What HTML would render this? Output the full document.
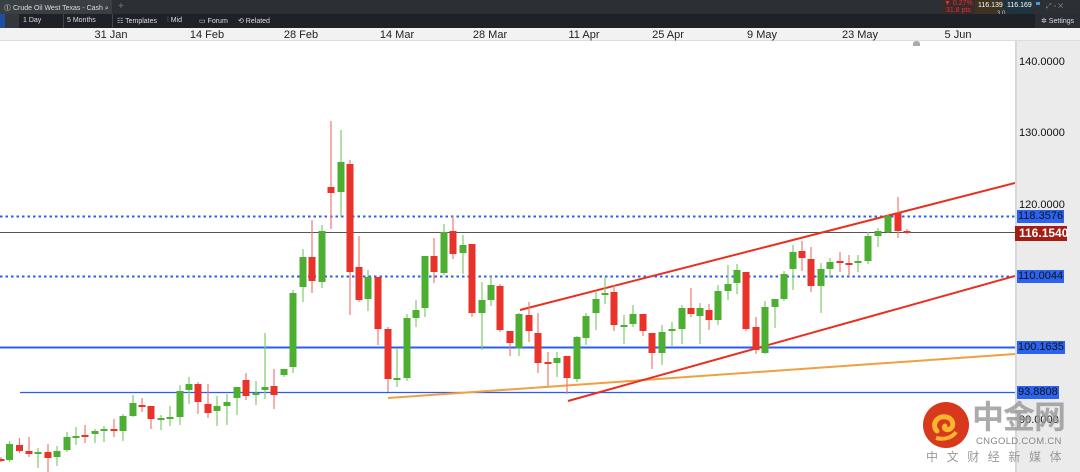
<!DOCTYPE html>
<html><head><meta charset="utf-8"><style>
*{margin:0;padding:0;box-sizing:border-box}
body{width:1080px;height:472px;overflow:hidden;background:#fff;font-family:"Liberation Sans","Noto Sans CJK SC",sans-serif;position:relative}
.a{position:absolute}
.t1{left:0;top:0;width:1080px;height:14px;background:#2c3034}
.t2{left:0;top:14px;width:1080px;height:14px;background:#1e2226}
.ds{left:0;top:28px;width:1080px;height:13px;background:#f2f2f2;border-bottom:1px solid #ddd}
.ds span{position:absolute;top:1px;font-size:11px;color:#222;transform:translateX(-50%)}
.ax{left:1015px;top:41px;width:65px;height:431px;background:#ebebeb;border-left:2px solid #d8d8d8}
.lab{position:absolute;font-size:11px;color:#111;left:1019px}
.bx{position:absolute;left:1017px;height:13px;background:#2b63f0;color:#111;font-size:11px;padding:0 1px;line-height:13px}
.w{color:#ddd;font-size:7px}
</style></head><body>
<div class="a t1"></div>
<div class="a" style="left:0;top:0;width:112px;height:14px;background:#3a3f44"></div>
<div class="a w" style="left:4px;top:3px;font-size:7px;color:#ddd">⓵ Crude Oil West Texas - Cash ⌕</div>
<div class="a w" style="left:118px;top:1px;font-size:10px;color:#777">+</div>
<div class="a" style="left:942px;top:0;width:32px;height:14px;background:#3a2a2a"></div>
<div class="a" style="left:944px;top:0;font-size:7px;color:#e03030;line-height:7px">▼ 0.27%<br>&nbsp;31.8 pts</div>
<div class="a" style="left:975px;top:0;width:28px;height:14px;background:#3e3322;color:#fff;font-size:7px;padding:2px 3px">116.139</div>
<div class="a" style="left:1003px;top:0;width:30px;height:14px;background:#1f3440;color:#fff;font-size:7px;padding:2px 4px">116.169</div>
<div class="a" style="left:997px;top:11px;width:14px;height:7px;background:#2a2e33;color:#ccc;font-size:6px">3.0</div>
<div class="a" style="left:1036px;top:2px;width:4px;height:3px;background:#3aa0e0"></div>
<div class="a w" style="left:1046px;top:3px;color:#888">⤢ ▫ ✕</div>
<div class="a t2"></div>
<div class="a" style="left:0;top:14px;width:5px;height:14px;background:#1d4fa0"></div>
<div class="a" style="left:5px;top:14px;width:14px;height:14px;background:#33383d"></div>
<div class="a w" style="left:23px;top:17px">1 Day</div>
<div class="a" style="left:63px;top:14px;width:1px;height:14px;background:#444"></div>
<div class="a w" style="left:67px;top:17px">5 Months</div>
<div class="a" style="left:112px;top:14px;width:1px;height:14px;background:#444"></div>
<div class="a w" style="left:117px;top:17px">☷ Templates</div>
<div class="a w" style="left:167px;top:17px">⫶ Mid</div>
<div class="a w" style="left:199px;top:17px">▭ Forum</div>
<div class="a w" style="left:238px;top:17px">⟲ Related</div>
<div class="a" style="left:1035px;top:14px;width:45px;height:14px;background:#2a2e33"></div>
<div class="a w" style="left:1041px;top:17px">✲ Settings</div>
<div class="a ds">
<span style="left:111px">31 Jan</span><span style="left:207px">14 Feb</span><span style="left:301px">28 Feb</span><span style="left:397px">14 Mar</span><span style="left:490px">28 Mar</span><span style="left:584px">11 Apr</span><span style="left:668px">25 Apr</span><span style="left:762px">9 May</span><span style="left:860px">23 May</span><span style="left:958px">5 Jun</span>
</div>
<div class="a ax"></div>
<div class="a" style="left:913px;top:41px;width:7px;height:5px;background:#aaa;border-radius:3px 3px 0 0"></div>
<svg class="a" style="left:0;top:0" width="1015" height="472" id="c">
<line x1="0" y1="216.5" x2="1015" y2="216.5" stroke="#2a5cf0" stroke-width="2" stroke-dasharray="2.5 3"/>
<line x1="0" y1="232.5" x2="1015" y2="232.5" stroke="#555" stroke-width="1"/>
<line x1="0" y1="276.5" x2="1015" y2="276.5" stroke="#2a5cf0" stroke-width="2" stroke-dasharray="2.5 3"/>
<line x1="0" y1="347.5" x2="1015" y2="347.5" stroke="#2a5cf0" stroke-width="2"/>
<line x1="20" y1="392.5" x2="1015" y2="392.5" stroke="#2a5cf0" stroke-width="1.2"/>
<line x1="388" y1="398" x2="1015" y2="354" stroke="#f0a040" stroke-width="2"/>
<line x1="520" y1="310" x2="1015" y2="183" stroke="#e83020" stroke-width="2"/>
<line x1="568" y1="401" x2="1015" y2="276" stroke="#e83020" stroke-width="2"/>
</svg>
<div class="lab" style="top:56px">140.0000</div>
<div class="lab" style="top:127px">130.0000</div>
<div class="lab" style="top:199px">120.0000</div>
<div class="lab" style="top:414px">90.0000</div>
<div class="bx" style="top:210px">118.3576</div>
<div class="a" style="left:1015px;top:226px;width:52px;height:15px;background:#a31d14;color:#fff;font-weight:bold;font-size:12px;padding-left:4px;line-height:15px">116.1540</div>
<div class="bx" style="top:270px">110.0044</div>
<div class="bx" style="top:341px">100.1635</div>
<div class="bx" style="top:386px">93.8808</div>
<svg class="a" style="left:922px;top:401px" width="48" height="48"><circle cx="24" cy="24" r="23" fill="#d8381c"/><path d="M15 30c-6-6 0-16 9-14 7 1 9 9 4 12-4 2-7-1-5-3" stroke="#f7b530" stroke-width="5" fill="none" stroke-linecap="round"/><path d="M14 37c8 2 16 0 20-6" stroke="#f7b530" stroke-width="4" fill="none"/></svg>
<div class="a" style="left:972px;top:399px;font-size:32px;font-weight:bold;color:rgba(150,150,150,.8);letter-spacing:-1px;line-height:36px">中金网</div>
<div class="a" style="left:976px;top:436px;font-size:9.5px;color:#888;letter-spacing:.3px">CNGOLD.COM.CN</div>
<div class="a" style="left:926px;top:448px;font-size:12px;color:#999;letter-spacing:8.6px">中文财经新媒体</div>
<script>
var d=[[1,459,460,457,462,0],[9.5,460,444,441,462,1],[19.5,445,451,438,453,0],[29,451,454,437,457,0],[38,454,452,448,468,1],[48,452,458,444,472,0],[57,457,451,446,466,1],[67,450,437,432,452,1],[76,437,436,427,445,1],[85,435,436,425,443,0],[95,434,431,429,443,1],[104,430,429,426,442,1],[114,429,431,419,437,0],[123,431,416,414,441,1],[133,416,403,395,417,1],[142,405,406,398,412,0],[151,406,419,406,429,0],[161,419,418,415,430,1],[170,418,417,406,426,1],[180,417,391,385,425,1],[189,390,384,377,404,1],[198,384,402,382,414,0],[208,404,413,384,418,0],[217,411,406,396,426,1],[227,406,402,394,425,1],[237,398,387,390,415,1],[246,380,396,373,400,0],[256,395,393,381,405,1],[265,390,387,333,399,1],[274,386,395,369,409,0],[284,375,369,369,377,1],[293,367,293,290,373,1],[303,287,257,249,302,1],[312,257,281,220,293,0],[322,282,231,225,288,1],[331,187,193,121,229,0],[341,192,162,130,217,1],[350,164,272,160,315,0],[359,267,300,236,302,0],[368,299,277,270,311,1],[378,277,329,277,345,0],[388,329,379,327,392,0],[397,379,378,348,387,1],[407,378,318,314,381,1],[416,318,310,300,327,1],[425,308,256,256,317,1],[434,256,272,238,283,0],[444,273,232,224,275,1],[453,231,254,216,259,0],[463,253,245,235,274,1],[472,244,313,244,317,0],[482,313,300,282,350,1],[491,300,285,276,306,1],[500,286,330,284,332,0],[510,331,343,331,356,0],[519,348,314,313,356,1],[529,315,331,302,342,0],[538,333,363,313,373,0],[548,362,363,352,386,0],[557,363,358,352,377,1],[567,356,378,356,394,0],[577,379,337,336,382,1],[586,338,316,313,345,1],[596,313,299,292,330,1],[605,294,293,277,304,1],[614,292,325,285,331,0],[624,326,325,315,344,1],[633,324,314,305,327,1],[643,314,331,314,336,0],[652,333,353,333,369,0],[662,353,332,325,365,1],[672,331,329,322,346,1],[682,329,308,305,344,1],[691,308,314,288,317,0],[700,316,308,303,344,1],[709,310,320,304,330,0],[718,320,291,285,325,1],[728,291,284,265,300,1],[737,283,270,264,294,1],[746,272,329,272,331,0],[756,327,350,317,354,0],[765,353,307,301,354,1],[775,307,299,299,328,1],[784,299,274,271,301,1],[793,269,252,245,290,1],[802,251,258,241,271,0],[811,259,286,247,292,0],[821,286,269,263,313,1],[830,269,262,258,278,1],[840,261,262,252,272,0],[849,263,264,255,276,0],[858,263,261,255,272,1],[868,261,236,232,264,1],[878,236,231,228,247,1],[888,232,216,215,233,1],[898,213,231,197,238,0],[907,231,232,229,234,0]];
var s='';d.forEach(function(c){var col=c[5]?'#4caf32':'#e8322a',wc=c[5]?'#7fcc6a':'#f07a72';var t=Math.min(c[1],c[2]),h=Math.max(Math.abs(c[1]-c[2]),2);
s+='<line x1="'+c[0]+'" y1="'+c[3]+'" x2="'+c[0]+'" y2="'+c[4]+'" stroke="'+wc+'" stroke-width="1.2"/><rect x="'+(c[0]-3.5)+'" y="'+t+'" width="7" height="'+h+'" fill="'+col+'"/>';});
document.getElementById('c').insertAdjacentHTML('beforeend',s);
</script>
</body></html>
